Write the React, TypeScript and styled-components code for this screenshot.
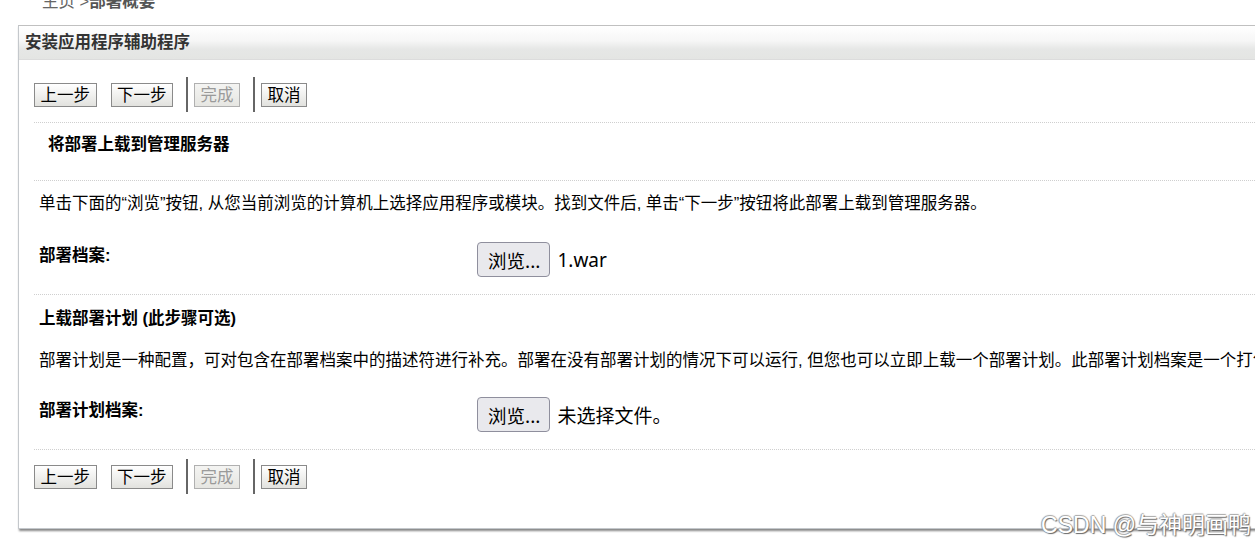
import styled, { createGlobalStyle } from "styled-components";

const GlobalStyle = createGlobalStyle`
html, body {
    margin: 0;
    padding: 0;
    overflow: hidden;
    background: #fff;
}
body {
    font-family: "Liberation Sans", "Noto Sans CJK SC", sans-serif;
    color: #000;
}
`;

const Page = styled.div`
position: relative;
width: 1255px;
height: 545px;
overflow: hidden;
`;

const Breadcrumb = styled.div`
margin: -7px 0 0 42px;
height: 32px;
font-size: 16.5px;
line-height: 16px;
color: #666;

    b {
        color: #555;
    }
`;

const Panel = styled.div`
margin-left: 18px;
width: 1320px;
border: 1px solid #c4c8cc;
border-top-color: #c0c0c0;
box-shadow: 1px 2px 2px #888;
background: #fff;
padding-bottom: 34px;
`;

const PanelHeader = styled.div`
height: 33px;
border-bottom: 1px solid #dcdcdc;
background: linear-gradient(#ffffff 0%, #f6f6f6 45%, #e6e7e6 70%, #e4e5e3 100%);
padding-left: 6px;
font-size: 16.5px;
font-weight: bold;
line-height: 33px;
color: #333;
`;

const Content = styled.div`
padding: 17px 0 0 15px;
`;

const Toolbar = styled.div<{ $top?: number }>`
display: flex;
align-items: center;
height: 35px;
margin-top: ${(p) => p.$top ?? 0}px;
`;

const StepButton = styled.button<{ $off?: boolean }>`
height: 24px;
padding: 0 5.5px;
margin-right: 14px;
font-family: "Liberation Sans", "Noto Sans CJK SC", sans-serif;
font-size: 16.5px;
line-height: 20px;
border: 1px solid ${(p) => (p.$off ? "#b0b0b0" : "#8a8a8a")};
border-radius: 0;
background: ${(p) => (p.$off ? "linear-gradient(#f4f4f2, #e6e6e2)" : "linear-gradient(#ffffff, #e2e2de)")};
color: ${(p) => (p.$off ? "#9a9a9a" : "#000")};
cursor: pointer;

    &:last-child {
        margin-right: 0;
    }
`;

const Divider = styled.span`
width: 2px;
height: 35px;
background: #666;
margin: 0 6px 0 -1px;
`;

const Rule = styled.div<{ $gap?: number }>`
border-top: 1px dotted #cfcfcf;
margin-top: ${(p) => p.$gap ?? 0}px;
`;

const SectionTitle = styled.div<{ $indent?: boolean }>`
padding: ${(p) => (p.$indent ? "11px 0 26px 14px" : "13px 0 0 5px")};
font-size: 16.5px;
font-weight: bold;
line-height: 20px;
`;

const Paragraph = styled.div<{ $top: number }>`
padding: ${(p) => p.$top}px 0 0 5px;
font-size: 16.5px;
line-height: 20px;
white-space: nowrap;
`;

const FieldRow = styled.div<{ $top: number }>`
display: grid;
grid-template-columns: 438px auto;
align-items: start;
padding: ${(p) => p.$top}px 0 17px 5px;
`;

const FieldLabel = styled.div`
padding-top: 3px;
font-size: 16.5px;
font-weight: bold;
line-height: 20px;
`;

const FilePicker = styled.div`
display: flex;
align-items: center;
gap: 7px;
`;

const BrowseButton = styled.button`
height: 35px;
padding: 0 9px 0 10px;
border: 1px solid #8f8f9d;
border-radius: 4px;
background: #e9e9ed;
font-family: "Noto Sans CJK SC", sans-serif;
font-size: 18.5px;
color: #000;
`;

const FileName = styled.span`
font-family: "Noto Sans", "Noto Sans CJK SC", sans-serif;
font-size: 19px;
color: #000;
`;

const Watermark = styled.div`
position: absolute;
right: 4px;
bottom: 7px;
font-family: "Liberation Sans", "Noto Sans CJK SC", sans-serif;
font-size: 23px;
line-height: 26px;
color: #fff;
text-shadow: 1px 1px 1px #666, -1px 0 1px #999, 0 -1px 1px #aaa;
`;

function Buttons({ top }: { top?: number }) {
    return (
        <Toolbar $top={top}>
            <StepButton>上一步</StepButton>
            <StepButton>下一步</StepButton>
            <Divider />
            <StepButton $off disabled>完成</StepButton>
            <Divider />
            <StepButton>取消</StepButton>
        </Toolbar>
    );
}

function App() {
    return (
        <Page>
            <GlobalStyle />
            <Breadcrumb>主页 &gt;<b>部署概要</b></Breadcrumb>
            <Panel>
                <PanelHeader>安装应用程序辅助程序</PanelHeader>
                <Content>
                    <Buttons />
                    <Rule $gap={10} />
                    <SectionTitle $indent>将部署上载到管理服务器</SectionTitle>
                    <Rule />
                    <Paragraph $top={12}>
                        单击下面的“浏览”按钮, 从您当前浏览的计算机上选择应用程序或模块。找到文件后, 单击“下一步”按钮将此部署上载到管理服务器。
                    </Paragraph>
                    <FieldRow $top={29}>
                        <FieldLabel>部署档案:</FieldLabel>
                        <FilePicker>
                            <BrowseButton>浏览...</BrowseButton>
                            <FileName>1.war</FileName>
                        </FilePicker>
                    </FieldRow>
                    <Rule />
                    <SectionTitle>上载部署计划 (此步骤可选)</SectionTitle>
                    <Paragraph $top={22}>
                        部署计划是一种配置，可对包含在部署档案中的描述符进行补充。部署在没有部署计划的情况下可以运行, 但您也可以立即上载一个部署计划。此部署计划档案是一个打包的 XML 文件。
                    </Paragraph>
                    <FieldRow $top={27}>
                        <FieldLabel>部署计划档案:</FieldLabel>
                        <FilePicker>
                            <BrowseButton>浏览...</BrowseButton>
                            <FileName>未选择文件。</FileName>
                        </FilePicker>
                    </FieldRow>
                    <Rule />
                    <Buttons top={9} />
                </Content>
            </Panel>
            <Watermark>CSDN @与神明画鸭</Watermark>
        </Page>
    );
}

export default App;
